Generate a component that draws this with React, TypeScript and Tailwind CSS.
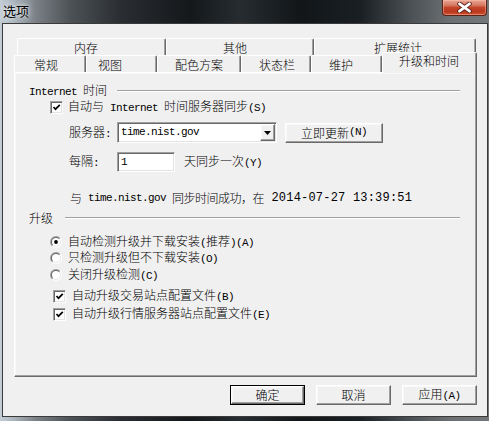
import React from "react";

const CJK = "font-['Noto_Sans_CJK_SC','Noto_Sans_CJK_JP',sans-serif]";

function M({ children }: { children: React.ReactNode }) {
  return (
    <span className="font-['Liberation_Mono',monospace] text-[11px] tracking-[-0.6px] whitespace-pre">
      {children}
    </span>
  );
}

const raised =
  "border border-t-white border-l-white border-r-[#696969] border-b-[#696969] shadow-[inset_-1px_-1px_0_#a0a0a0,inset_1px_1px_0_#f8f8f8]";
const sunken =
  "border border-t-[#a0a0a0] border-l-[#a0a0a0] border-r-white border-b-white shadow-[inset_1px_1px_0_#696969,inset_-1px_-1px_0_#e3e3e3]";

function CheckBox() {
  return (
    <div className={`w-[13px] h-[13px] bg-white shrink-0 ${sunken} flex items-center justify-center`}>
      <svg width="11" height="11" viewBox="0 0 11 11">
        <polyline points="2.5,5 4.5,7.2 8.8,2.8" fill="none" stroke="#000" strokeWidth="1.7" />
      </svg>
    </div>
  );
}

function Radio({ on, id }: { on?: boolean; id: string }) {
  return (
    <svg width="12" height="12" viewBox="0 0 12 12" className="shrink-0">
      <defs>
        <linearGradient id={`o${id}`} x1="0" y1="0" x2="1" y2="1">
          <stop offset="0.45" stopColor="#a0a0a0" />
          <stop offset="0.55" stopColor="#ffffff" />
        </linearGradient>
        <linearGradient id={`i${id}`} x1="0" y1="0" x2="1" y2="1">
          <stop offset="0.45" stopColor="#696969" />
          <stop offset="0.55" stopColor="#e3e3e3" />
        </linearGradient>
      </defs>
      <circle cx="6" cy="6" r="6" fill={`url(#o${id})`} />
      <circle cx="6" cy="6" r="5" fill={`url(#i${id})`} />
      <circle cx="6" cy="6" r="4" fill="#fff" />
      {on && <circle cx="6" cy="6" r="1.9" fill="#000" />}
    </svg>
  );
}

function Tab({ w, pl, label }: { w: number; pl: number; label: string }) {
  return (
    <div
      style={{ width: w, paddingLeft: pl }}
      className="h-full flex items-center pt-[1px] border-t border-l border-r border-t-white border-l-white border-r-[#696969] rounded-t-[2px] shadow-[inset_-1px_0_0_#a0a0a0] bg-[#f0f0f0] text-[12px] leading-none text-black whitespace-nowrap"
    >
      {label}
    </div>
  );
}

function GroupLabel({ children, ml }: { children: React.ReactNode; ml: string }) {
  return (
    <div className="flex items-center h-[16px] pl-[14px] pr-[16px]">
      <span className="text-[12px] leading-none whitespace-nowrap">{children}</span>
      <div className={`flex-1 ${ml} h-[2px] border-t border-t-[#a0a0a0] border-b border-b-white`} />
    </div>
  );
}

function Btn({ children, w, def }: { children: React.ReactNode; w: number; def?: boolean }) {
  const inner = (
    <div
      style={{ width: def ? w - 2 : w }}
      className={`h-full flex items-center justify-center bg-[#f0f0f0] text-[12px] leading-none ${raised}`}
    >
      {children}
    </div>
  );
  if (def)
    return (
      <div style={{ width: w }} className="h-[20px] border border-black">
        {inner}
      </div>
    );
  return <div className="h-[20px]">{inner}</div>;
}

export default function App() {
  return (
    <div
      className={`w-[489px] h-[421px] relative overflow-hidden flex flex-col pl-[2px] pr-[1px] pb-[4px] ${CJK} font-light text-black`}
      style={{
        background:
          "linear-gradient(to right, #c4cdd6 0px, #aab4bd 14px, #7b8086 36px, #4d5256 70px, #2a2e32 120px, #14181b 190px, #272c30 240px, #121619 300px, #1a1f23 360px, #4b5054 410px, #6c7073 450px, #747779 489px)",
      }}
    >
      {/* title bar */}
      <div className="h-[23px] shrink-0 flex items-start pl-[1px] pt-[3px]">
        <span className="text-[13px] leading-[16px] font-normal text-black [text-shadow:0_0_6px_rgba(255,255,255,0.9),0_0_3px_rgba(255,255,255,0.7)]">
          选项
        </span>
      </div>
      <div
        className="absolute right-[2px] top-0 w-[45px] h-[16px] rounded-b-[4px] border border-t-0 border-[#5a2218] flex items-center justify-center shadow-[inset_0_0_0_1px_rgba(255,200,180,0.45)]"
        style={{
          background:
            "linear-gradient(to bottom, #e8a593 0%, #d77a63 35%, #c4452a 50%, #b9381e 75%, #d0512e 100%)",
        }}
      >
        <svg width="15" height="11" viewBox="0 0 15 11">
          <path d="M2.5 1.8 L12.5 9.2 M12.5 1.8 L2.5 9.2" stroke="#4a1a12" strokeWidth="4.4" strokeLinecap="round" />
          <path d="M2.5 1.8 L12.5 9.2 M12.5 1.8 L2.5 9.2" stroke="#ffffff" strokeWidth="2.8" strokeLinecap="round" />
        </svg>
      </div>

      {/* client */}
      <div className="flex-1 border border-[#3a3a3a] bg-[#f0f0f0] flex flex-col pt-[14px] pl-[11px] pr-[10px]">
        {/* tabs row 1 */}
        <div className="flex h-[17px] ml-[3px]">
          <Tab w={149} pl={56} label="内存" />
          <Tab w={148} pl={56} label="其他" />
          <Tab w={162} pl={59} label="扩展统计" />
        </div>
        {/* tabs row 2 */}
        <div className="flex h-[17px] items-end relative z-10">
          <div className="h-[17px] flex">
            <Tab w={72} pl={19} label="常规" />
            <Tab w={71} pl={11} label="视图" />
            <Tab w={84} pl={17} label="配色方案" />
            <Tab w={70} pl={17} label="状态栏" />
            <Tab w={71} pl={17} label="维护" />
          </div>
          <div className="relative top-[1px] h-[21px] w-[95px] pl-[16px] pb-[4px] flex items-center border-t border-l border-r border-t-white border-l-white border-r-[#696969] rounded-t-[2px] shadow-[inset_-1px_0_0_#a0a0a0] bg-[#f0f0f0] text-[12px] leading-none whitespace-nowrap">
            升级和时间
          </div>
        </div>

        {/* panel */}
        <div className={`h-[305px] bg-[#f0f0f0] ${raised} flex flex-col text-[12px] leading-none`}>
          <div className="mt-[10px]">
            <GroupLabel ml="ml-[10px]">
              <M>Internet </M>时间
            </GroupLabel>
          </div>
          <div className="h-[16px] flex items-center pl-[35px] gap-[5px]">
            <CheckBox />
            <span className="whitespace-nowrap">
              自动与<M> Internet </M>时间服务器同步<M>(S)</M>
            </span>
          </div>
          <div className="mt-[7px] h-[21px] flex items-center pl-[54px]">
            <span className="w-[48px] whitespace-nowrap">
              服务器<M>:</M>
            </span>
            <div className={`w-[160px] h-[21px] bg-white ${sunken} flex items-center justify-between pl-[3px] pr-[1px]`}>
              <M>time.nist.gov</M>
              <div className={`w-[15px] h-[17px] bg-[#f0f0f0] ${raised} flex items-center justify-center`}>
                <svg width="7" height="4" viewBox="0 0 7 4">
                  <path d="M0 0 L7 0 L3.5 4 Z" fill="#000" />
                </svg>
              </div>
            </div>
            <div className="ml-[8px]">
              <Btn w={98}>
                <span className="h-[21px] flex items-center">
                  立即更新<M>(N)</M>
                </span>
              </Btn>
            </div>
          </div>
          <div className="mt-[9px] h-[20px] flex items-center pl-[54px]">
            <span className="w-[48px] whitespace-nowrap">
              每隔<M>:</M>
            </span>
            <div className={`w-[58px] h-[20px] bg-white ${sunken} flex items-center pl-[3px]`}>
              <M>1</M>
            </div>
            <span className="ml-[9px] whitespace-nowrap">
              天同步一次<M>(Y)</M>
            </span>
          </div>
          <div className="mt-[18px] h-[16px] flex items-center pl-[55px] whitespace-nowrap">
            与<M> time.nist.gov </M>
            <span className="tracking-[-0.5px]">同步时间成功，在</span>
            <span className="font-['Liberation_Mono',monospace] text-[12px] tracking-[0.2px] whitespace-pre"> 2014-07-27 13:39:51</span>
          </div>
          <div className="mt-[4px]">
            <GroupLabel ml="ml-[12px]">升级</GroupLabel>
          </div>
          <div className="mt-[8px] h-[16px] flex items-center pl-[35px] gap-[6px]">
            <Radio on id="r1" />
            <span className="whitespace-nowrap">
              自动检测升级并下载安装<M>(</M>推荐<M>)(A)</M>
            </span>
          </div>
          <div className="h-[16px] flex items-center pl-[35px] gap-[6px]">
            <Radio id="r2" />
            <span className="whitespace-nowrap">
              只检测升级但不下载安装<M>(O)</M>
            </span>
          </div>
          <div className="mt-[1px] h-[16px] flex items-center pl-[35px] gap-[6px]">
            <Radio id="r3" />
            <span className="whitespace-nowrap">
              关闭升级检测<M>(C)</M>
            </span>
          </div>
          <div className="mt-[5px] h-[16px] flex items-center pl-[38px] gap-[6px]">
            <CheckBox />
            <span className="whitespace-nowrap">
              自动升级交易站点配置文件<M>(B)</M>
            </span>
          </div>
          <div className="mt-[2px] h-[16px] flex items-center pl-[38px] gap-[6px]">
            <CheckBox />
            <span className="whitespace-nowrap">
              自动升级行情服务器站点配置文件<M>(E)</M>
            </span>
          </div>
        </div>

        {/* buttons */}
        <div className="mt-[8px] flex justify-end gap-[11px]">
          <Btn w={75} def>
            确定
          </Btn>
          <Btn w={75}>取消</Btn>
          <Btn w={75}>
            <span>
              应用<M>(A)</M>
            </span>
          </Btn>
        </div>
      </div>
    </div>
  );
}
